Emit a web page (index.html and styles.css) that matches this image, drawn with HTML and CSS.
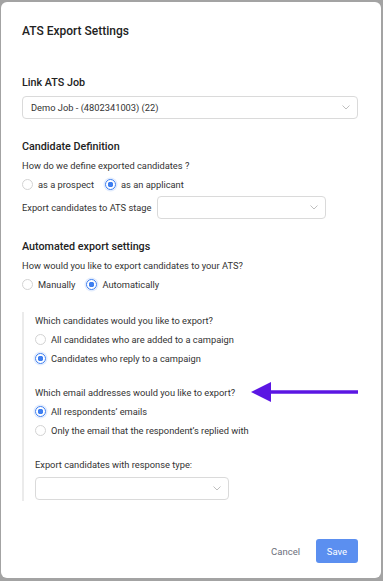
FILE: index.html
```html
<!DOCTYPE html>
<html lang="en">
<head>
  <meta charset="UTF-8">
  <title>ATS Export Settings</title>
  <link rel="stylesheet" href="styles.css">
</head>
<body>

  <div class="modal">
    <h1 class="modal-title">ATS Export Settings</h1>

    <div class="section first">
      <h2>Link ATS Job</h2>
      <div class="select wide">
        <span>Demo Job - (4802341003) (22)</span>
        <svg class="chevron" width="8" height="5" viewBox="0 0 8 5"><path d="M0.5 0.5 L4 4 L7.5 0.5" fill="none" stroke="#bfbfbf" stroke-width="1"/></svg>
      </div>
    </div>

    <div class="section">
      <h2>Candidate Definition</h2>
      <p class="question">How do we define exported candidates ?</p>
      <div class="radio-row">
        <label class="radio"><span class="dot"></span>as a prospect</label>
        <label class="radio"><span class="dot checked"></span>as an applicant</label>
      </div>
      <div class="stage-row">
        <span>Export candidates to ATS stage</span>
        <div class="select stage">
          <span></span>
          <svg class="chevron" width="8" height="5" viewBox="0 0 8 5"><path d="M0.5 0.5 L4 4 L7.5 0.5" fill="none" stroke="#bfbfbf" stroke-width="1"/></svg>
        </div>
      </div>
    </div>

    <div class="section">
      <h2>Automated export settings</h2>
      <p class="question">How would you like to export candidates to your ATS?</p>
      <div class="radio-row">
        <label class="radio"><span class="dot"></span>Manually</label>
        <label class="radio"><span class="dot checked"></span>Automatically</label>
      </div>
    </div>

    <div class="nested">
      <p class="question">Which candidates would you like to export?</p>
      <div class="radio-list">
        <label class="radio"><span class="dot"></span>All candidates who are added to a campaign</label>
        <label class="radio"><span class="dot checked"></span>Candidates who reply to a campaign</label>
      </div>

      <p class="question spaced">Which email addresses would you like to export?</p>
      <div class="radio-list">
        <label class="radio"><span class="dot checked"></span>All respondents’ emails</label>
        <label class="radio"><span class="dot"></span>Only the email that the respondent’s replied with</label>
      </div>

      <p class="question spaced">Export candidates with response type:</p>
      <div class="select response">
        <span></span>
        <svg class="chevron" width="8" height="5" viewBox="0 0 8 5"><path d="M0.5 0.5 L4 4 L7.5 0.5" fill="none" stroke="#bfbfbf" stroke-width="1"/></svg>
      </div>
    </div>

    <div class="footer">
      <button class="btn-cancel">Cancel</button>
      <button class="btn-save">Save</button>
    </div>

    <!-- fleche d'annotation -->
    <svg class="arrow" width="110" height="24" viewBox="0 0 110 24">
      <line x1="18" y1="12" x2="108" y2="12" stroke="#5b16e3" stroke-width="3.5"/>
      <polygon points="1,12 21,2 21,22" fill="#5b16e3"/>
    </svg>
  </div>

</body>
</html>
```

FILE: styles.css
```css
body {
  margin: 0;
  background-color: #a3a3a3;
  font-family: 'Roboto', sans-serif;
  color: #333;
}

.modal {
  position: relative;
  box-sizing: border-box;
  width: 380px;
  height: 576px;
  margin: 2px 0 0 1px;
  padding: 21px 23px 15px 21px;
  background: white;
  border-radius: 6px;
  display: flex;
  flex-direction: column;
}

.modal-title {
  margin: 0;
  font-size: 12px;
  line-height: 16px;
  font-weight: 500;
  color: #222;
}

.section {
  margin-top: 21px;
}

.section.first {
  margin-top: 37px;
}

h2 {
  margin: 0;
  font-size: 10.75px;
  line-height: 14px;
  font-weight: 500;
  color: #222;
}

.question {
  margin: 5px 0 0 0;
  font-size: 9.3px;
  line-height: 13px;
}

.select {
  box-sizing: border-box;
  height: 23px;
  border: 1px solid #dadada;
  border-radius: 4px;
  display: flex;
  align-items: center;
  justify-content: space-between;
  padding: 0 7px 0 8px;
  font-size: 9.3px;
  color: #333;
}

.select.wide {
  margin-top: 6px;
}

.select.stage {
  width: 169px;
}

.select.response {
  width: 194px;
  margin-top: 6px;
}

.chevron {
  display: block;
}

.radio-row {
  display: flex;
  gap: 11px;
  margin-top: 6px;
}

.radio-list {
  display: flex;
  flex-direction: column;
  gap: 6px;
  margin-top: 6px;
}

.radio {
  display: flex;
  align-items: center;
  gap: 5px;
  font-size: 9.3px;
  line-height: 13px;
}

.dot {
  box-sizing: border-box;
  width: 11px;
  height: 11px;
  border-radius: 50%;
  border: 1px solid #d3d3d3;
  background: white;
}

.dot.checked {
  border-color: #3f7ff0;
  background: radial-gradient(circle, #3f7ff0 0 2.6px, white 3px);
  box-shadow: 0 0 0 1.5px rgba(63, 127, 240, 0.15);
}

.stage-row {
  display: flex;
  align-items: center;
  gap: 6px;
  margin-top: 5px;
  font-size: 9.3px;
}

.nested {
  margin-top: 21px;
  border-left: 2px solid #ebebeb;
  padding: 2px 0 1px 11px;
}

.nested .question {
  margin-top: 0;
}

.nested .question.spaced {
  margin-top: 21px;
}

.footer {
  margin-top: auto;
  display: flex;
  justify-content: flex-end;
  align-items: center;
}

.btn-cancel {
  border: none;
  background: none;
  font-family: 'Roboto', sans-serif;
  font-size: 9.5px;
  color: #6b6f7b;
  padding: 0 8px;
  margin-right: 8px;
  cursor: pointer;
}

.btn-save {
  width: 42px;
  height: 24px;
  border: none;
  border-radius: 3px;
  background-color: #5b8ff0;
  color: white;
  font-family: 'Roboto', sans-serif;
  font-size: 9.5px;
  cursor: pointer;
}

.arrow {
  position: absolute;
  left: 249px;
  top: 378px;
}
```
